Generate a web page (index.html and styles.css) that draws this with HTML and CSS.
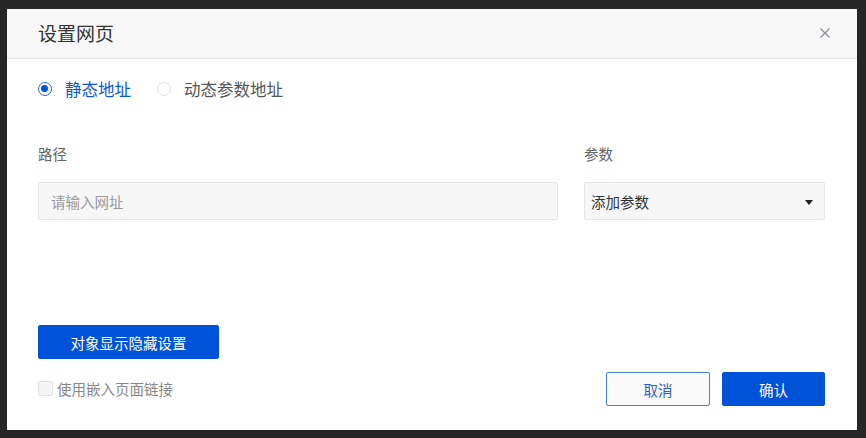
FILE: index.html
```html
<!DOCTYPE html>
<html lang="zh-CN">
<head>
<meta charset="utf-8">
<title>设置网页</title>
<link rel="stylesheet" href="styles.css">
</head>
<body>
<div class="dialog">
  <div class="dialog-header">
    <span class="dialog-title">设置网页</span>
    <span class="close">
      <svg width="12" height="12" viewBox="0 0 12 12"><path d="M1.5 1.5 L10.5 10.5 M10.5 1.5 L1.5 10.5" stroke="#8a8f99" stroke-width="1.3" fill="none"/></svg>
    </span>
  </div>
  <div class="dialog-body">
    <div class="radio-row">
      <label class="radio checked"><span class="radio-dot"></span><span class="radio-text">静态地址</span></label>
      <label class="radio"><span class="radio-dot"></span><span class="radio-text">动态参数地址</span></label>
    </div>
    <div class="fields">
      <div class="field path">
        <div class="field-label">路径</div>
        <div class="input"><span class="placeholder">请输入网址</span></div>
      </div>
      <div class="field param">
        <div class="field-label">参数</div>
        <div class="input select"><span class="value">添加参数</span><span class="caret"></span></div>
      </div>
    </div>
    <div class="bottom">
      <button class="btn btn-primary wide">对象显示隐藏设置</button>
      <div class="footer">
        <label class="checkbox"><span class="box"></span><span class="check-text">使用嵌入页面链接</span></label>
        <div class="actions">
          <button class="btn btn-default">取消</button>
          <button class="btn btn-primary">确认</button>
        </div>
      </div>
    </div>
  </div>
</div>
</body>
</html>
```

FILE: styles.css
```css
* { box-sizing: border-box; }
html, body { margin: 0; height: 100%; }
body {
  background: #262626;
  padding: 9px 9px 8px 7px;
  font-family: "Noto Sans CJK SC", "Noto Sans", sans-serif;
  color: #333;
}
.dialog {
  width: 850px;
  height: 421px;
  background: #fff;
  display: flex;
  flex-direction: column;
}
.dialog-header {
  height: 50px;
  background: #f8f8f8;
  border-bottom: 1px solid #e6e6e6;
  display: flex;
  align-items: center;
  justify-content: space-between;
  padding: 0 26px 0 31px;
}
.dialog-title {
  font-size: 19px;
  color: #333;
  line-height: 1;
  margin-top: -2px;
}
.close { display: flex; margin-top: -2px; }
.dialog-body {
  flex: 1;
  padding: 0 32px 24px 31px;
  display: flex;
  flex-direction: column;
}
.radio-row {
  display: flex;
  align-items: center;
  gap: 26px;
  margin-top: 19px;
  height: 22px;
}
.radio {
  display: flex;
  align-items: center;
  font-size: 16.5px;
  color: #555;
}
.radio-dot {
  width: 14px;
  height: 14px;
  border-radius: 50%;
  border: 1px solid #e3e3e3;
  margin-right: 13px;
  position: relative;
}
.radio.checked { color: #0a56d6; }
.radio.checked .radio-dot {
  border: 1.5px solid #2a66dc;
}
.radio.checked .radio-dot::after {
  content: "";
  position: absolute;
  left: 2px; top: 2px;
  width: 7px; height: 7px;
  border-radius: 50%;
  background: #0052d9;
}
.fields {
  display: flex;
  gap: 26px;
  margin-top: 44px;
}
.field.path { width: 520px; }
.field.param { width: 241px; }
.field-label {
  font-size: 14.5px;
  color: #666;
  height: 20px;
  line-height: 20px;
  margin-bottom: 18px;
}
.input {
  height: 38px;
  background: #f7f7f7;
  border: 1px solid #e6e6e6;
  border-radius: 2px;
  display: flex;
  align-items: center;
  padding: 0 12px;
  font-size: 14.5px;
}
.placeholder { color: #999; }
.select { padding: 0 11px 0 6px; justify-content: space-between; }
.value { color: #333; }
.caret {
  width: 0; height: 0;
  border-left: 4px solid transparent;
  border-right: 4px solid transparent;
  border-top: 5px solid #222;
  margin-top: 2px;
}
.bottom {
  margin-top: auto;
}
.btn {
  font-family: inherit;
  font-size: 14.5px;
  border-radius: 2px;
  cursor: pointer;
  padding: 0;
}
.btn-primary {
  background: #0052d9;
  border: 1px solid #0052d9;
  color: #fff;
}
.btn-default {
  background: #fafafa;
  border: 1px solid #4a7ee0;
  color: #2e5fcc;
}
.wide { width: 181px; height: 34px; display: block; }
.footer {
  display: flex;
  align-items: center;
  justify-content: space-between;
  margin-top: 13px;
}
.checkbox {
  display: flex;
  align-items: center;
  font-size: 14.5px;
  color: #888;
  margin-top: -2px;
}
.box {
  width: 15px; height: 15px;
  background: #f5f5f5;
  border: 1px solid #e3e3e3;
  border-radius: 2px;
  margin-right: 4px;
}
.actions { display: flex; gap: 12px; }
.actions .btn { width: 103px; height: 34px; }
.actions .btn-default { width: 104px; }
```
